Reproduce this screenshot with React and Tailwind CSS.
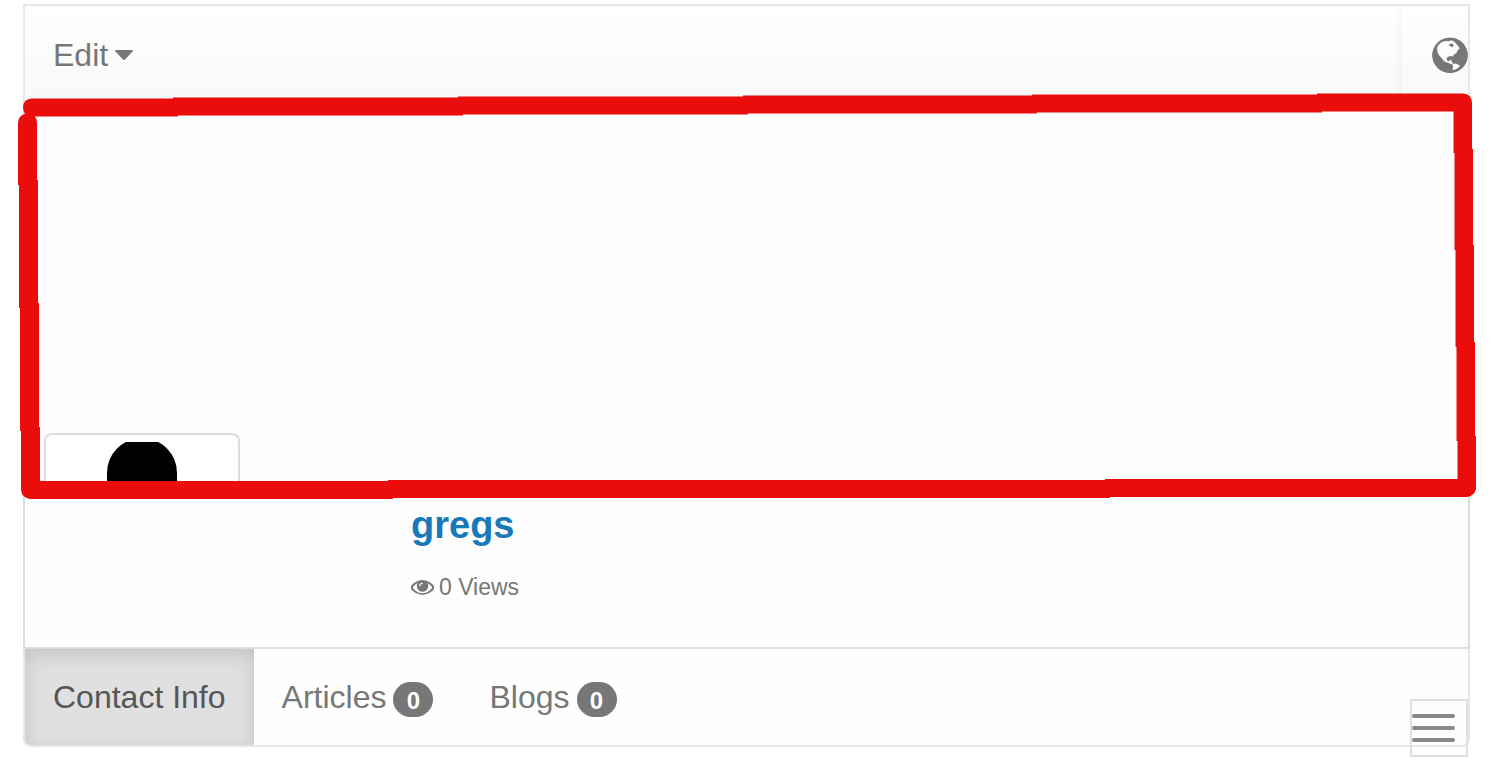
const tabs = [
	{ id: "contact", label: "Contact Info" },
	{ id: "articles", label: "Articles", count: 0 },
	{ id: "blogs", label: "Blogs", count: 0 },
];

function GlobeIcon() {
	return (
		<svg viewBox="0 0 36 36" className="h-9 w-9" aria-hidden="true">
			<circle cx="18" cy="18.3" r="17.6" fill="#777" />
			<g fill="#fcfcfc">
				<path d="M5 11 6.5 8 9 5.600 13 4 17 4.200 19.500 3.200 22 4.600 24.500 7 27.800 11.500 25.500 13.500 24.500 16 22 17.500 20.500 19.500 18.300 19 15.500 20 14.600 22 15.500 24 17.300 24.200 18 23 19.800 23 19.300 25 20.800 25.600 20.600 27.400 18 26.600 14.500 25.300 12 24.200 9.500 21 6.800 18 5.500 15Z" />
				<path d="m20.500 27.200 2-.8 2.200.4.8.8 2.500.9-1 1.700-2 1.200-1.600 1.200-3 .6.6-3.200Z" />
			</g>
			<path d="M16.500 8.200 18.500 6.800 20.500 6.600 21.500 8 20.800 10.200 19 9.400Z" fill="#777" />
			<circle cx="18" cy="18.300" r="16.800" fill="none" stroke="#777" strokeWidth="1.600" />
		</svg>
	);
}

function EyeIcon() {
	return (
		<svg viewBox="0 384 1792 1152" className="h-[15px] w-[23px]" fill="currentColor" aria-hidden="true">
			<circle cx="896" cy="870" r="400" />
			<path d="M1664 960q-152-236-381-353 61 104 61 225 0 185-131.5 316.5t-316.5 131.5-316.5-131.5-131.5-316.5q0-121 61-225-229 117-381 353 133 205 333.5 326.5t434.5 121.5 434.5-121.5 333.5-326.5zm184 0q0 34-20 69-140 230-400 368.5t-532 138.5-532-139-400-368q-20-35-20-69t20-69q140-229 400-368t532-139 532 139 400 368q20 35 20 69z" />
			<path d="M690 830q0-170 190-190" fill="none" stroke="#fefefe" strokeWidth="90" strokeLinecap="round" />
		</svg>
	);
}

// Hand drawn marker around the cover area
function CoverMarker() {
	return (
		<svg
			viewBox="17 92 1459 409"
			preserveAspectRatio="none"
			className="pointer-events-none absolute -inset-x-2 -inset-y-3 h-[calc(100%+24px)] w-[calc(100%+16px)] overflow-visible"
			fill="#eb0c0c"
			aria-hidden="true"
		>
			<path d="M32 98.5H173V97.5H458V96.5H743V95.5H1032V94.5H1317V93.5H1463Q1472 94 1472 103V111.5H1322V112.5H1037V113.5H748V114.5H463V115.5H178V116.5H32Q23 116 23 107.5T32 98.5Z" />
			<path d="M27.5 113.5Q37 114 37 123V180H38V303H39V427H40V489H21V431H20V308H19V185H18V123Q18.5 114 27.5 113.5Z" />
			<path d="M1472 102V149H1473V245H1474V342H1475V436H1476V490H1457.5V441H1456.5V347H1455.5V250H1454.5V153H1453.5V102Z" />
			<path d="M21 481H388V480H1105V479H1476V488Q1475 496 1467 497H1110V498H393V499H30Q22 498 21 490Z" />
		</svg>
	);
}

function Header() {
	return (
		<header className="flex justify-between border-2 border-b-0 border-[#e7e7e7] bg-linear-to-b from-white to-[#f8f8f8]">
			<button className="flex items-center gap-[7px] px-7 py-[29px] text-[32px] leading-10 text-[#777]">
				Edit
				<svg viewBox="0 0 18 10" className="h-[10px] w-[18px]" fill="currentColor" aria-hidden="true">
					<path d="M1 0h16q1.400.5.5 1.600l-7.200 7.600q-1.300 1.200-2.600 0L.5 1.600Q-.4.5 1 0Z" />
				</svg>
			</button>
			<div className="flex">
				<div className="w-2 bg-linear-to-r from-transparent to-black/3" />
				<button aria-label="Language" className="flex w-[66px] items-center justify-end">
					<GlobeIcon />
				</button>
			</div>
		</header>
	);
}

function Cover() {
	return (
		<div className="relative flex h-[385px] items-end px-[19px]">
			<div className="flex h-14 w-[196px] justify-center overflow-hidden rounded-t-lg border-2 border-b-0 border-[#ddd] bg-white pt-[7px]">
				<svg viewBox="0 0 72 48" className="h-12 w-[72px]" role="img" aria-label="gregs">
					<path d="M1 48V31a35 35 0 0 1 70 0v17Z" />
				</svg>
			</div>
			<CoverMarker />
		</div>
	);
}

export default function App() {
	return (
		<main className="min-h-screen bg-white pt-1 pr-[30px] pl-[23px] font-['Liberation_Sans',Arial,sans-serif]">
			<div className="relative">
				<Header />

				<section className="border-2 border-t-0 border-[#ddd] bg-[#fefefe]">
					<Cover />
					<div className="flex flex-col items-start gap-[22px] pt-3 pb-11 pl-[386px]">
						<h1 className="text-[38px] leading-[48px] font-bold text-[#1779ba]">
							<a href="#gregs">gregs</a>
						</h1>
						<p className="flex items-center gap-[5px] text-[23px] leading-8 text-[#777]">
							<EyeIcon />0 Views
						</p>
					</div>
				</section>

				<nav className="flex overflow-hidden rounded-b-lg border-2 border-t-0 border-[#e7e7e7] bg-[#fefefe]">
					{tabs.map((tab) => (
						<a
							key={tab.id}
							href={`#${tab.id}`}
							className={
								tab.id === "contact"
									? "flex items-center bg-[#e0e0e0] px-7 py-7 text-[32px] leading-10 text-[#555] shadow-[inset_0_6px_18px_rgba(0,0,0,0.125)]"
									: "flex items-center gap-[7px] px-7 py-7 text-[32px] leading-10 text-[#777]"
							}
						>
							{tab.label}
							{tab.count !== undefined && (
								<span className="mt-[5px] flex h-[35px] w-10 items-center justify-center rounded-[20px] bg-[#777] pt-[3px] text-2xl font-bold text-white">
									{tab.count}
								</span>
							)}
						</a>
					))}
				</nav>

				{/* Floating menu toggle */}
				<button
					aria-label="Menu"
					className="absolute right-[2px] -bottom-[10px] flex h-[58px] w-[58px] flex-col justify-center gap-2 border-2 border-[#e0e0e0]"
				>
					<span className="h-1 w-[43px] rounded-full bg-[#888]" />
					<span className="h-1 w-[43px] rounded-full bg-[#888]" />
					<span className="h-1 w-[43px] rounded-full bg-[#888]" />
				</button>
			</div>
		</main>
	);
}
